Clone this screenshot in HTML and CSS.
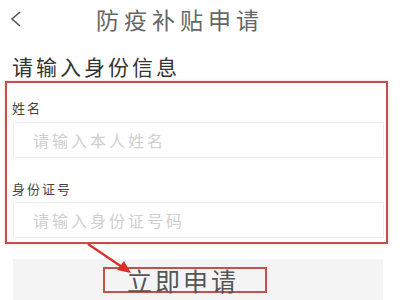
FILE: index.html
```html
<!DOCTYPE html>
<html lang="zh">
<head>
<meta charset="utf-8">
<link rel="stylesheet" href="styles.css">
</head>
<body>
<div class="page">
  <div class="header">
    <svg class="back" width="14" height="18" viewBox="0 0 14 18"><polyline points="11,2 3,9 11,16" fill="none" stroke="#555" stroke-width="1.6"/></svg>
    <div class="title">防疫补贴申请</div>
  </div>
  <div class="heading">请输入身份信息</div>
  <div class="card">
    <div class="label first">姓名</div>
    <div class="input">请输入本人姓名</div>
    <div class="label second">身份证号</div>
    <div class="input">请输入身份证号码</div>
  </div>
  <div class="submit">
    <span class="submit-text">立即申请</span>
  </div>
  <svg class="arrow" width="400" height="300" viewBox="0 0 400 300">
    <line x1="88" y1="244" x2="122" y2="267" stroke="#d9302a" stroke-width="2.2"/>
    <polygon points="131,273 117,270 124,261" fill="#d9302a"/>
  </svg>
</div>
</body>
</html>
```

FILE: styles.css
```css
html, body {
  margin: 0;
  padding: 0;
  background: #ffffff;
}
.page {
  position: relative;
  width: 400px;
  height: 300px;
  overflow: hidden;
  font-family: "Noto Sans CJK SC", "Noto Sans", sans-serif;
}
.header {
  display: flex;
  align-items: center;
  height: 38px;
  padding-left: 9px;
}
.back {
  display: block;
}
.title {
  margin-left: 73px;
  font-size: 23px;
  letter-spacing: 5px;
  color: #666;
  line-height: 38px;
}
.heading {
  margin: 14px 0 0 12px;
  font-size: 21px;
  letter-spacing: 3px;
  color: #333;
  line-height: 28px;
  font-weight: 400;
}
.card {
  margin: 1px 0 0 5px;
  width: 372px;
  border: 2px solid #c2514c;
  padding: 0 2px 4px 5px;
  box-shadow: 0 0 2px rgba(194, 81, 76, 0.35);
}
.label {
  font-size: 13px;
  line-height: 16px;
  letter-spacing: 2px;
  color: #444;
}
.label.first {
  margin-top: 17px;
  margin-bottom: 6px;
}
.label.second {
  margin-top: 23px;
  margin-bottom: 5px;
}
.input {
  margin-left: 1px;
  height: 34px;
  border: 1px solid #efefef;
  padding-left: 19px;
  font-size: 16px;
  line-height: 34px;
  letter-spacing: 3px;
  color: #cfcfcf;
}
.submit {
  margin: 15px 0 0 13px;
  width: 370px;
  height: 45px;
  background: #f4f4f4;
  padding-left: 90px;
  padding-top: 8px;
  box-sizing: border-box;
}
.submit-text {
  display: inline-block;
  box-sizing: border-box;
  width: 164px;
  height: 26px;
  border: 2px solid #c2514c;
  padding-left: 22px;
  font-size: 25px;
  line-height: 22px;
  letter-spacing: 3px;
  color: #555;
}
.arrow {
  position: absolute;
  left: 0;
  top: 0;
  pointer-events: none;
}
```
